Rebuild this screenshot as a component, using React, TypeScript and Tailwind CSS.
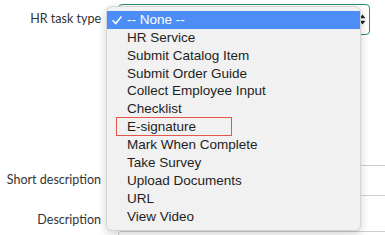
import React from 'react';

const options = [
  '-- None --',
  'HR Service',
  'Submit Catalog Item',
  'Submit Order Guide',
  'Collect Employee Input',
  'Checklist',
  'E-signature',
  'Mark When Complete',
  'Take Survey',
  'Upload Documents',
  'URL',
  'View Video',
];

const labelFont = { fontFamily: 'Lato, "Open Sans", sans-serif' };
const menuFont = { fontFamily: '"Liberation Sans", Arial, sans-serif' };

const App: React.FC = () => {
  return (
    <div className="relative w-[385px] h-[235px] overflow-hidden bg-white">
      {/* form behind the open menu */}
      <div className="flex flex-col pt-[4px]" style={labelFont}>
        <div className="flex items-center">
          <label className="w-[101px] shrink-0 whitespace-nowrap text-right text-[12.5px] text-[#333]">HR task type</label>
          <div className="ml-[17px] w-[252px] h-[31px] rounded-[4px] border-[1.5px] border-[#2f8a77] flex items-center justify-end pr-[3px]">
            <svg width="7" height="11" viewBox="0 0 7 11">
              <path d="M3.5 0.5 L6.5 4.2 L0.5 4.2 Z" fill="#222" />
              <path d="M3.5 10.5 L6.5 6.8 L0.5 6.8 Z" fill="#222" />
            </svg>
          </div>
        </div>

        <div className="flex items-center mt-[130px]">
          <label className="w-[101px] shrink-0 whitespace-nowrap text-right text-[12.5px] text-[#333]">Short description</label>
          <div className="ml-[17px] w-[290px] shrink-0 h-[31px] border border-[#cfcfcf] rounded-[3px]" />
        </div>

        <div className="flex items-start mt-[16px]">
          <label className="w-[101px] shrink-0 whitespace-nowrap text-right text-[12.5px] text-[#333] leading-[16px]">Description</label>
          <div className="ml-[17px] mt-[19px] w-[290px] shrink-0 h-[40px] border border-[#cfcfcf] rounded-[3px]" />
        </div>
      </div>

      {/* open dropdown menu */}
      <div
        className="absolute left-[106px] top-[6px] w-[255px] py-[4px] rounded-[6px] bg-[#f1f1f1] border border-[#d4d4d4] shadow-[0_3px_10px_rgba(0,0,0,0.18)]"
        style={menuFont}
      >
        {options.map((opt, i) => (
          <div
            key={opt}
            className={
              i === 0
                ? 'relative h-[17.9px] flex items-center pl-[20px] text-[13.5px] bg-[#4d8ef6] text-white'
                : 'relative h-[17.9px] flex items-center pl-[20px] text-[13.5px] text-[#1e1e1e]'
            }
          >
            {i === 0 && (
              <svg className="absolute left-[5px] top-[5px]" width="10" height="9" viewBox="0 0 10 9">
                <path d="M1 4.8 L3.8 7.6 L9 1" stroke="white" strokeWidth="1.6" fill="none" strokeLinecap="round" strokeLinejoin="round" />
              </svg>
            )}
            {opt}
            {opt === 'E-signature' && (
              <div className="absolute left-[9px] top-[-1px] w-[116px] h-[19px] border-[1.5px] border-[#e5554c]" />
            )}
          </div>
        ))}
      </div>
    </div>
  );
};

export default App;
